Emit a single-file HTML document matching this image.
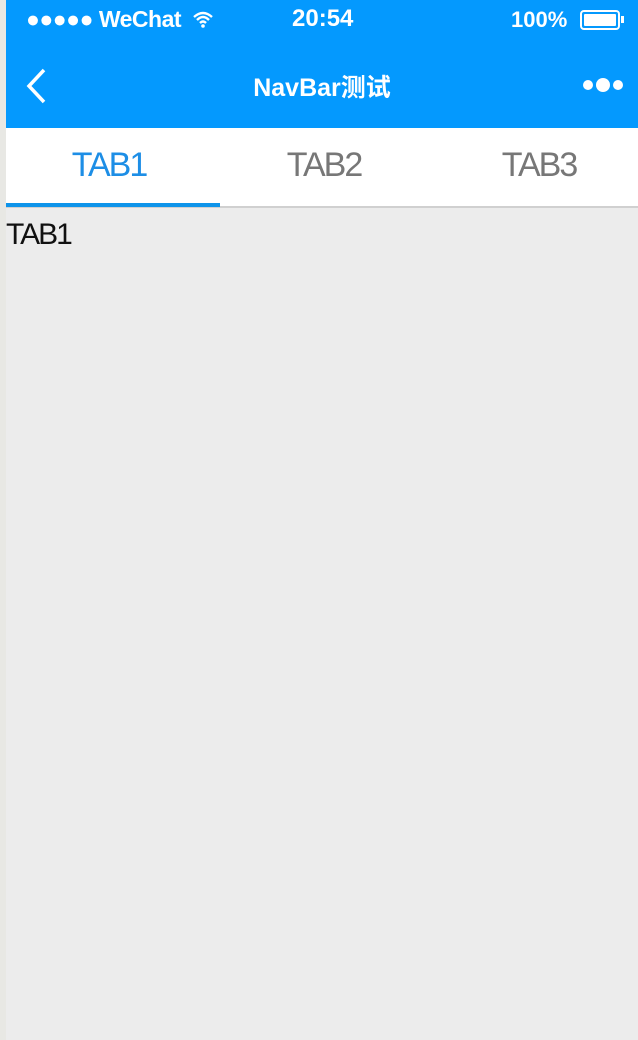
<!DOCTYPE html>
<html><head><meta charset="utf-8"><style>
*{margin:0;padding:0;box-sizing:border-box}
body{width:638px;height:1040px;background:#e8e8e4;font-family:"Liberation Sans","Noto Sans CJK SC",sans-serif;position:relative;overflow:hidden}
.main{position:absolute;left:6px;top:0;width:632px;height:1040px;background:#ececec}
.hdr{position:absolute;left:0;top:0;width:632px;height:128px;background:#0499fe;color:#fff}
.t{position:absolute;font-weight:bold}
.tabs{position:absolute;left:0;top:128px;width:632px;height:80px;background:#fff;border-bottom:2px solid #d0d0d0}
.tab{position:absolute;top:18px;font-size:34px;letter-spacing:-2px;color:#777;width:214px;text-align:center}
.ul{position:absolute;left:0;top:75px;width:214px;height:4px;background:#0e94ea}
</style></head><body>
<div class="main">
<div class="hdr">
<div class="t" style="left:20px;top:6px;font-size:23px;letter-spacing:-0.5px">●●●●● WeChat</div>
<svg style="position:absolute;left:186px;top:10px" width="22" height="18" viewBox="0 0 22 18"><path d="M2 7 Q11 -1 20 7 M5 10 Q11 4 17 10 M8 13 Q11 10 14 13" stroke="#fff" stroke-width="2.4" fill="none"/><circle cx="11" cy="16" r="1.8" fill="#fff"/></svg>
<div class="t" style="left:286px;top:5px;font-size:24px">20:54</div>
<div class="t" style="left:505px;top:7px;font-size:22px">100%</div>
<div style="position:absolute;left:574px;top:10px;width:40px;height:20px;border:2px solid #fff;border-radius:4px;padding:2px"><div style="width:100%;height:100%;background:#fff;border-radius:1px"></div></div>
<div style="position:absolute;left:615px;top:16px;width:3px;height:7px;background:#fff"></div>
<svg style="position:absolute;left:18px;top:68px" width="24" height="36" viewBox="0 0 24 36"><path d="M20 2 L5 18 L20 34" stroke="#fff" stroke-width="3.5" fill="none"/></svg>
<div class="t" style="left:0;width:632px;text-align:center;top:68px;font-size:25px">NavBar测试</div>
<div style="position:absolute;left:577px;top:80px;width:10px;height:10px;border-radius:50%;background:#fff"></div>
<div style="position:absolute;left:590px;top:78px;width:14px;height:14px;border-radius:50%;background:#fff"></div>
<div style="position:absolute;left:607px;top:80px;width:10px;height:10px;border-radius:50%;background:#fff"></div>
</div>
<div class="tabs">
<div class="tab" style="left:-4px;color:#1d8ee6">TAB1</div>
<div class="tab" style="left:211px">TAB2</div>
<div class="tab" style="left:426px">TAB3</div>
<div class="ul"></div>
</div>
<div style="position:absolute;left:0;top:218px;font-size:30px;letter-spacing:-2px;color:#111">TAB1</div>
</div>
</body></html>
